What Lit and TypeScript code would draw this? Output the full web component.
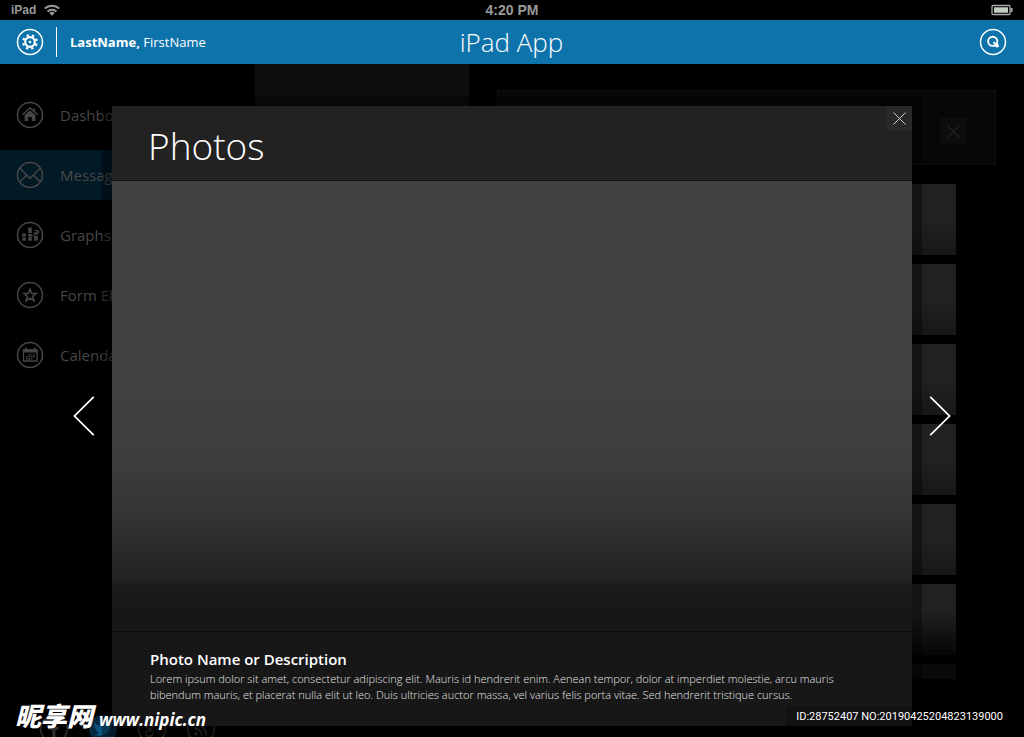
import { LitElement, html, css, svg } from "lit";
import { customElement, property } from "lit/decorators.js";

const ring = svg`<circle cx="14" cy="14" r="12.5" fill="none" stroke="currentColor" stroke-width="1.5"/>`;

const glyphs: Record<string, unknown> = {
  home: svg`<path fill="currentColor" d="M14 9.400l5.400 4.700v6h-3.600v-4.200h-3.600v4.200H8.600v-6z"/><path fill="none" stroke="currentColor" stroke-width="1.500" d="M6.300 13.800L14 7l7.700 6.800M18.200 7v3.600"/>`,
  mail: svg`<path fill="none" stroke="currentColor" stroke-width="1.400" d="M4.200 7.600l9.800 9.800 9.800-9.800M4.200 20.600l6.400-6.400M23.800 20.600l-6.400-6.400"/>`,
  chart: svg`<path fill="none" stroke="currentColor" stroke-width="3.600" d="M8 19.800v-3.200M8 15.600v-3.200M14 19.800v-3.200M14 15.600v-2.600M14 12V6.400M20 19.800v-5M20 13.600v-2.400"/><path fill="none" stroke="currentColor" stroke-width="1" d="M12.500 14.500l2.500 2.200 6.500-6.500M18.500 9.600h4v3"/>`,
  star: svg`<path fill="none" stroke="currentColor" stroke-width="1.600" d="M14 8l1.700 4.200 4.400.3-3.400 2.800 1.200 4.400-3.900-2.500-3.900 2.500 1.200-4.400-3.400-2.800 4.400-.3z"/>`,
  calendar: svg`<path fill="none" stroke="currentColor" stroke-width="1.300" d="M7.500 9h13.500v11h-13.500z"/><path fill="currentColor" d="M7 8.300h14.500v3.300H7zM9 6.600h1.600v3H9zM17.700 6.600h1.600v3h-1.600z"/><path stroke="currentColor" stroke-width="1.300" stroke-dasharray="1.700 .7" d="M12.400 13.800h6.400M10 15.900h8.800M10 18h6.400"/>`,
  gear: svg`<circle cx="14" cy="14" r="4.800" fill="none" stroke="currentColor" stroke-width="2.200"/><circle cx="14" cy="14" r="1.300" fill="currentColor"/><circle cx="14" cy="14" r="6.800" fill="none" stroke="currentColor" stroke-width="2.200" stroke-dasharray="2.400 2.940" stroke-dashoffset="3.700"/>`,
  search: svg`<circle cx="13.700" cy="13.300" r="4.600" fill="none" stroke="currentColor" stroke-width="1.900"/><path fill="none" stroke="currentColor" stroke-width="1.900" d="M14.500 14.200l4.300 4.300M15.500 17.800h4.400M18.200 15.200v4.400"/>`,
  facebook: svg`<path fill="currentColor" d="M15.400 24v-9h2.600l.4-2.800h-3v-1.600c0-1 .4-1.500 1.600-1.500h1.500V6.400h-2.300c-2.700 0-3.800 1.400-3.800 3.700v2.100h-2V15h2v9z"/>`,
  twitter: svg`<circle cx="14" cy="14" r="13" fill="#04293f"/><path fill="#0b567f" d="M6 8c2 2.400 4.600 3.800 7.700 3.900-.6-4.200 3.800-5.500 5.900-3.300l2.200-.8-.9 2 1.600-.4-1.700 1.900c.2 6.600-7.800 11.600-15 7.700 2 .1 3.600-.4 4.800-1.500-1.800-.2-2.700-1.200-3.100-2.500h1.500C7 14.200 6 12.800 6 11.300l1.500.4C6 10.600 5.300 9.300 6 8z"/>`,
  google: svg`<path fill="none" stroke="currentColor" stroke-width="1.400" d="M16 8h-4c-4.500.6-4.500 5.600-.3 5.600 3.600 0 4.100-4.300 1.500-5.500M11.500 13.600c-.8 1.400 3.500 2 3.500 4.400 0 3.400-7 3.200-7 .2 0-2 2.500-2.600 4-2.600M18 9.500h5M20.500 7v5"/>`,
  rss: svg`<circle cx="9.500" cy="18.500" r="1.700" fill="currentColor"/><path fill="none" stroke="currentColor" stroke-width="1.800" d="M8 13.300a6.700 6.700 0 016.700 6.700M8 9a11 11 0 0111 11"/>`,
};

@customElement("ring-icon")
class RingIcon extends LitElement {
  @property() name = "home";
  static styles = css`
    :host { display: block; flex: none; width: 28px; height: 28px; }
    .svg { display: block; width: 100%; height: 100%; }
  `;
  render() {
    return html`<svg class="svg" viewBox="0 0 28 28" aria-hidden="true">${glyphs[this.name]}${this.name === "twitter" ? "" : ring}</svg>`;
  }
}

@customElement("photo-dialog")
class PhotoDialog extends LitElement {
  static styles = css`
    :host {
      display: flex; flex-direction: column; flex: 1; min-width: 0;
      background: #171717; box-shadow: 0 0 0 10px rgba(0, 0, 0, 0.35);
    }
    .head {
      display: flex; justify-content: space-between; align-items: flex-start;
      height: 74px; padding-left: 36px; background: #222; border-bottom: 1px solid #141414;
    }
    .title { margin: 0; padding-top: 12px; font-size: 37px; line-height: 56px; font-weight: 300; color: #fff; }
    .close {
      display: grid; place-items: center; width: 25px; height: 25px; padding: 0;
      border: 0; background: #292929; color: #ccc; cursor: pointer;
    }
    .cross { width: 13px; height: 13px; }
    .photo {
      flex: 1; border-bottom: 1px solid #0c0c0c;
      background: linear-gradient(#414141 0, #404040 50%, #3d3d3d 62%, #353535 73%, #232323 87%, #202020 89.400%, #1b1b1b 89.500%, #171717 96%);
    }
    .caption { height: 94px; box-sizing: border-box; padding: 15px 38px 0; }
    .name { margin: 0; font-size: 15px; line-height: 24px; font-weight: 600; color: #fff; }
    .text { margin: 0; font-size: 11px; line-height: 16px; font-weight: 300; color: #e4e4e4; white-space: nowrap; }
  `;
  render() {
    return html`
      <header class="head">
        <h2 class="title">Photos</h2>
        <button class="close" aria-label="Close">
          <svg class="cross" viewBox="0 0 13 13" stroke="currentColor"><path d="M.5.5l12 12M12.500.5l-12 12"/></svg>
        </button>
      </header>
      <div class="photo"></div>
      <div class="caption">
        <h3 class="name">Photo Name or Description</h3>
        <p class="text">
          Lorem ipsum dolor sit amet, consectetur adipiscing elit. Mauris id hendrerit enim. Aenean tempor, dolor at imperdiet molestie, arcu mauris<br />
          bibendum mauris, et placerat nulla elit ut leo. Duis ultricies auctor massa, vel varius felis porta vitae. Sed hendrerit tristique cursus.
        </p>
      </div>
    `;
  }
}

@customElement("app-root")
class AppRoot extends LitElement {
  static styles = css`
    :host {
      display: flex; flex-direction: column; height: 100vh; overflow: hidden; position: relative;
      background: #000; color: #fff; font-family: "Open Sans", "Noto Sans", sans-serif;
    }
    .status {
      display: grid; grid-template-columns: 1fr auto 1fr; align-items: center; flex: none;
      height: 20px; padding: 0 11px; color: #999;
      font: 700 12px/20px "Liberation Sans", Arial, sans-serif;
    }
    .carrier { display: flex; align-items: center; gap: 8px; }
    .wifi { width: 16px; height: 12px; }
    .clock { font-size: 14px; }
    .battery { justify-self: end; width: 22px; height: 12px; }
    .bar {
      display: grid; grid-template-columns: 1fr auto 1fr; align-items: center; flex: none;
      height: 44px; padding: 0 17px 0 16px; background: #0e73ab;
    }
    .user { display: flex; align-items: center; }
    .round { display: block; padding: 0; border: 0; background: none; color: #fff; cursor: pointer; }
    .end { justify-self: end; }
    .rule { width: 1px; height: 30px; margin: 0 13px 0 12px; background: #fff; }
    .who { font-size: 13px; line-height: 20px; }
    .app { margin: 0; font-size: 26px; line-height: 44px; font-weight: 300; }
    .stage { flex: 1; min-height: 0; display: grid; grid-template: minmax(0, 1fr) / minmax(0, 1fr); }
    .under, .over { grid-area: 1 / 1; min-height: 0; }
    .under { display: grid; grid-template-columns: 255px 214px minmax(0, 1fr); overflow: hidden; }
    .side { display: flex; flex-direction: column; justify-content: space-between; height: 680px; padding-top: 26px; box-sizing: border-box; }
    .nav { display: flex; flex-direction: column; gap: 10px; }
    .link {
      display: flex; align-items: center; gap: 16px; height: 50px; padding-left: 16px;
      font-size: 15px; color: #464646; text-decoration: none;
    }
    .link.on { background: #021926; color: #484848; }
    .social { display: flex; gap: 19px; padding-left: 39px; }
    .net { color: #2c2c2c; }
    .net ring-icon { width: 30px; height: 30px; }
    .column { height: 600px; background: #0d0d0d; }
    .detail { display: flex; flex-direction: column; padding: 26px 28px 0; }
    .search {
      display: flex; justify-content: flex-end; height: 75px; box-sizing: border-box; padding: 27px 29px 0 0;
      border: 1px solid #101010; background: repeating-conic-gradient(#0b0b0b 0 25%, #030303 0 50%) 0 0 / 2px 2px;
    }
    .clear {
      display: grid; place-items: center; width: 26px; height: 26px; padding: 0;
      border: 0; background: #0d0d0d; color: #2e2e2e;
    }
    .cross { width: 13px; height: 13px; }
    .cards {
      display: flex; flex-direction: column; gap: 9px; height: 495px; overflow: hidden; margin: 19px 40px 0;
      mask-image: linear-gradient(#000 86%, rgba(0, 0, 0, 0.3) 95%, rgba(0, 0, 0, 0.3));
    }
    .card {
      flex: none; height: 71px;
      background:
        repeating-conic-gradient(rgba(0, 0, 0, 0.25) 0 25%, transparent 0 50%) 0 0 / 2px 2px,
        linear-gradient(#262626 50%, #1a1a1a);
    }
    .over { position: relative; display: flex; padding: 42px 0 11px; }
    .flank { display: flex; align-items: center; flex: none; width: 112px; padding: 0 17px; box-sizing: border-box; }
    .flank.prev { justify-content: flex-end; }
    .step { padding: 0; border: 0; background: none; color: #fff; cursor: pointer; }
    .chevron { display: block; width: 22px; height: 40px; }
    .logo, .serial { position: absolute; bottom: 0; }
    .logo { left: 15px; display: flex; align-items: baseline; gap: 6px; line-height: 34px; white-space: nowrap; }
    .mark { font: italic 900 26px/34px "Noto Sans CJK SC", sans-serif; }
    .site { font-size: 17px; font-style: italic; font-weight: 700; }
    .serial { right: 0; padding: 0 21px 9px 10px; font: 11px/22px Roboto, sans-serif; background: rgba(0, 0, 0, 0.2); }
  `;

  private links = [
    ["home", "Dashboard"],
    ["mail", "Messages"],
    ["chart", "Graphs"],
    ["star", "Form Elements"],
    ["calendar", "Calendar"],
  ];

  render() {
    return html`
      <div class="status">
        <span class="carrier">
          iPad
          <svg class="wifi" viewBox="0 0 18 13" fill="none" stroke="#999" stroke-width="2.200" aria-hidden="true">
            <path d="M1 5a11.500 11.500 0 0116 0M4 8.200a7.200 7.200 0 0110 0"/><path fill="#999" stroke="none" d="M9 13L6 10a4.300 4.300 0 016 0z"/>
          </svg>
        </span>
        <span class="clock">4:20 PM</span>
        <svg class="battery" viewBox="0 0 22 12" aria-hidden="true">
          <rect x="1" y="1.500" width="18" height="9" rx="1" fill="none" stroke="#aaa" stroke-width="1.300"/>
          <rect x="3" y="3.300" width="14" height="5.400" fill="#c3cdc0"/><path d="M19.500 4h2v4h-2z" fill="#aaa"/>
        </svg>
      </div>
      <header class="bar">
        <div class="user">
          <button class="round" aria-label="Settings"><ring-icon name="gear"></ring-icon></button>
          <span class="rule"></span>
          <span class="who"><b>LastName,</b> FirstName</span>
        </div>
        <h1 class="app">iPad App</h1>
        <button class="round end" aria-label="Search"><ring-icon name="search"></ring-icon></button>
      </header>
      <main class="stage">
        <div class="under">
          <div class="side">
            <nav class="nav">
              ${this.links.map(
                ([icon, label]) => html`<a href="#" class="link ${icon === "mail" ? "on" : ""}"><ring-icon name=${icon}></ring-icon>${label}</a>`
              )}
            </nav>
            <div class="social">
              ${["facebook", "twitter", "google", "rss"].map(
                (n) => html`<a href="#" class="net" aria-label=${n}><ring-icon name=${n}></ring-icon></a>`
              )}
            </div>
          </div>
          <div class="column"></div>
          <div class="detail">
            <div class="search">
              <button class="clear" aria-label="Clear">
                <svg class="cross" viewBox="0 0 13 13" stroke="currentColor"><path d="M.5.5l12 12M12.500.5l-12 12"/></svg>
              </button>
            </div>
            <div class="cards">${Array.from({ length: 7 }, () => html`<div class="card"></div>`)}</div>
          </div>
        </div>
        <div class="over">
          <div class="flank prev">
            <button class="step" aria-label="Previous photo">
              <svg class="chevron" viewBox="0 0 22 41" fill="none" stroke="currentColor" stroke-width="1.800"><path d="M21 .8L1.200 20.500 21 40.200"/></svg>
            </button>
          </div>
          <photo-dialog></photo-dialog>
          <div class="flank">
            <button class="step" aria-label="Next photo">
              <svg class="chevron" viewBox="0 0 22 41" fill="none" stroke="currentColor" stroke-width="1.800"><path d="M1 .8l19.800 19.700L1 40.200"/></svg>
            </button>
          </div>
        </div>
      </main>
      <div class="logo"><span class="mark">昵享网</span><span class="site">www.nipic.cn</span></div>
      <div class="serial">ID:28752407 NO:20190425204823139000</div>
    `;
  }
}
